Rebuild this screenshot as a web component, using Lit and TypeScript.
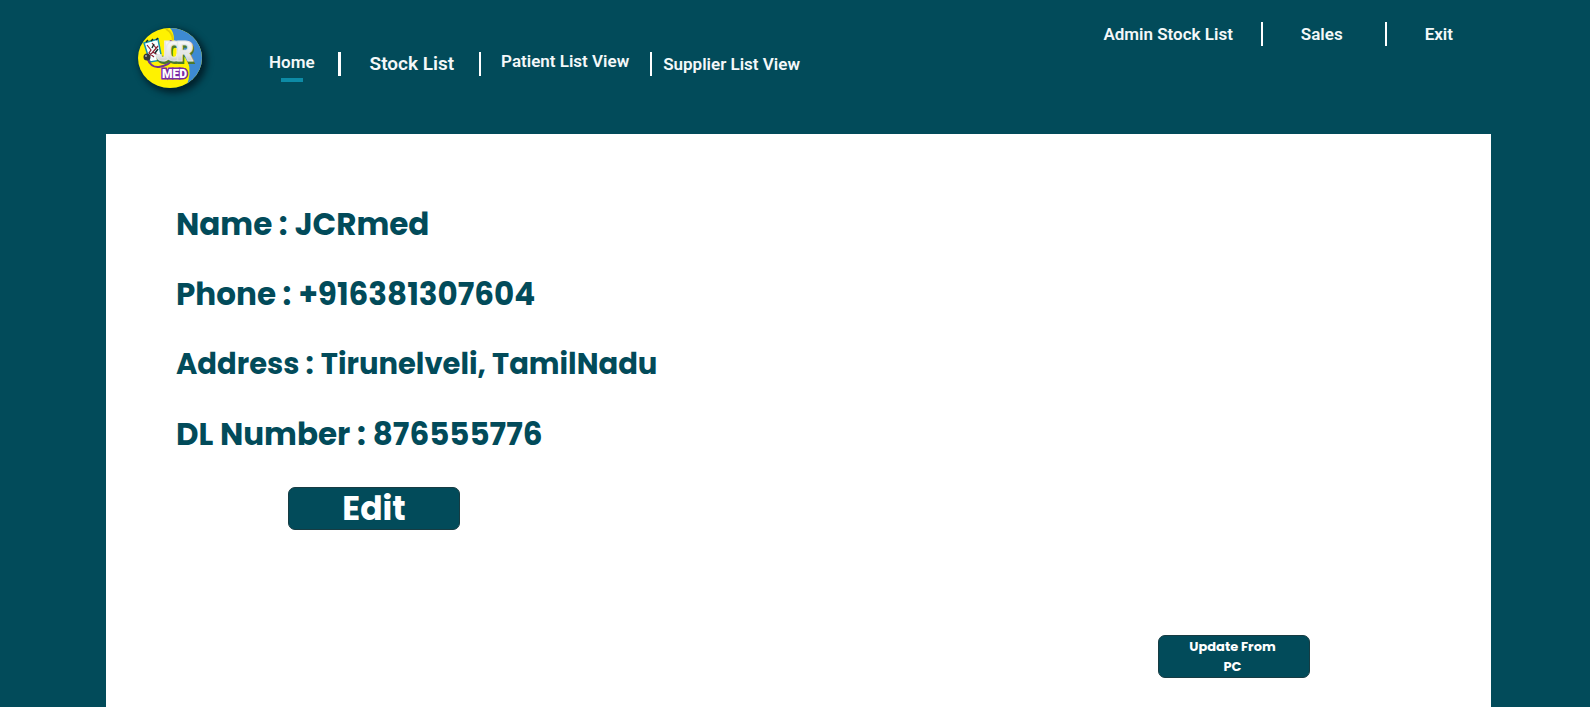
import { LitElement, html, css, svg } from "lit";
import { customElement, property } from "lit/decorators.js";

@customElement("jcr-logo")
class JcrLogo extends LitElement {
  static styles = css`
    :host { display: block; flex: none; width: 64px; height: 60px; border-radius: 50%; box-shadow: 3px 3px 6px 2px rgba(0, 20, 30, 0.75); }
    svg { display: block; width: 100%; height: 100%; }
    .brand, .sub { font-family: Roboto, sans-serif; font-weight: 900; }
    .brand { font-size: 27px; }
    .sub { font-size: 12px; }
  `;

  render() {
    return html`<svg viewBox="0 0 64 60" role="img" aria-label="JCR MED">
      <defs>
        <linearGradient id="metal" x1="0" y1="0" x2="0" y2="1">
          <stop offset="0" stop-color="#ffffff" />
          <stop offset="0.6" stop-color="#e4e6e5" />
          <stop offset="1" stop-color="#aab0ab" />
        </linearGradient>
        <clipPath id="disc"><ellipse cx="32" cy="30" rx="32" ry="30" /></clipPath>
      </defs>
      ${svg`<g clip-path="url(#disc)">
        <rect width="64" height="60" fill="#fff200" />
        <path d="M32 0Q36 4 36 12L50 34Q54 44 48 60H64V0Z" fill="#3d8ad2" />
        <path d="M28 1Q35 5 35 13" fill="none" stroke="#e0cc00" stroke-width="2" />
        <path d="M6 15L20 11L24 32L12 34Z" fill="#f5ffff" stroke="#1592ad" stroke-width="1.5" />
        <path d="M9 17L13 22L11 25L16 29M14 15L18 20L15 24L21 28M10 29L14 25L20 18" fill="none" stroke="#8b2032" stroke-width="1.2" />
        <path d="M8 14L10 12M13 13L15 11M18 12L20 10M16 16L14 20M20 21L17 25" stroke="#102b28" stroke-width="1.4" />
        <path d="M9 30Q13 40 21 39Q32 37 36 30M31 14Q34 11 34 18" fill="none" stroke="#75358d" stroke-width="2" />
        <circle cx="9" cy="29" r="3.5" fill="#36383b" /><circle cx="8" cy="28" r="1" fill="#a8adb0" />
      </g>`}
      <text class="brand" x="19 28 39" y="35" fill="#4b7a2c" stroke="#4b7a2c" stroke-width="2">JCR</text>
      <text class="brand" x="18 27 38" y="33" fill="url(#metal)" stroke="#e4e6e5" stroke-width="1">JCR</text>
      <text class="sub" x="24" y="50" fill="#ffffff" stroke="#7829a5" stroke-width="3" paint-order="stroke">MED</text>
    </svg>`;
  }
}

@customElement("app-root")
class AppRoot extends LitElement {
  @property({ attribute: false })
  details = [
    { label: "Name", value: "JCRmed" },
    { label: "Phone", value: "+916381307604" },
    { label: "Address", value: "Tirunelveli, TamilNadu", long: true },
    { label: "DL Number", value: "876555776" },
  ];

  static styles = css`
    * { box-sizing: border-box; }
    :host { display: flex; flex-direction: column; min-height: 100vh; background: #024b5a; font-family: Roboto, sans-serif; }
    .header { display: flex; justify-content: space-between; align-items: flex-start; padding: 22px 137px 0 138px; height: 134px; }
    .brand-nav { display: flex; align-items: center; gap: 67px; padding-top: 6px; }
    .nav { display: flex; align-items: center; padding-top: 11px; }
    .link { color: #f4f8f9; text-decoration: none; font-size: 17px; font-weight: 600; line-height: 24px; white-space: nowrap; }
    .large { font-size: 19px; }
    .raised { padding-bottom: 5px; }
    .current { display: grid; justify-items: center; padding-top: 10px; }
    .current::after { content: ""; width: 22px; height: 4px; margin-top: 4px; background: #0d8ba6; }
    .bar { width: 2px; height: 24px; background: #ffffff; }
    .bar-thick { width: 3px; margin: 0 29px 0 23px; }
    .bar-a { margin: 0 20px 0 25px; }
    .bar-b { margin: 0 11px 0 21px; }
    .side { display: flex; align-items: center; }
    .bar-c { margin: 0 38px 0 28px; }
    .bar-d { margin: 0 38px 0 42px; }
    .panel { flex: 1; display: flex; flex-direction: column; margin: 0 99px 0 106px; padding: 55px 70px 29px; background: #ffffff; font-family: Poppins, Inter, sans-serif; color: #024b5a; }
    .details { margin: 0; }
    .row { display: flex; gap: 7px; font-size: 31px; font-weight: 700; line-height: 70px; }
    .row.long { font-size: 29px; }
    .row dt, .row dd { margin: 0; }
    .button { height: 43px; border: 1px solid #173c43; border-radius: 7px; background: #024b5a; color: #ffffff; font-family: inherit; font-weight: 700; cursor: pointer; }
    .edit { align-self: flex-start; width: 172px; margin: 18px 0 0 112px; padding: 0; font-size: 33px; line-height: 40px; }
    .update { align-self: flex-end; width: 152px; margin: auto 111px 0 0; padding: 0 28px 0 25px; font-size: 13px; line-height: 20px; }
  `;

  render() {
    return html`
      <header class="header">
        <div class="brand-nav">
          <jcr-logo></jcr-logo>
          <nav class="nav" aria-label="Main">
            <a class="link current raised" href="#home" aria-current="page">Home</a>
            <span class="bar bar-thick"></span>
            <a class="link large" href="#stock">Stock List</a>
            <span class="bar bar-a"></span>
            <a class="link raised" href="#patients">Patient List View</a>
            <span class="bar bar-b"></span>
            <a class="link" href="#suppliers">Supplier List View</a>
          </nav>
        </div>
        <nav class="side" aria-label="Admin">
          <a class="link" href="#admin-stock">Admin Stock List</a>
          <span class="bar bar-c"></span>
          <a class="link" href="#sales">Sales</a>
          <span class="bar bar-d"></span>
          <a class="link" href="#exit">Exit</a>
        </nav>
      </header>
      <main class="panel">
        <dl class="details">
          ${this.details.map((d) => html`<div class="row ${d.long ? "long" : ""}"><dt>${d.label} :</dt><dd>${d.value}</dd></div>`)}
        </dl>
        <button class="button edit" type="button">Edit</button>
        <button class="button update" type="button">Update From PC</button>
      </main>
    `;
  }
}
